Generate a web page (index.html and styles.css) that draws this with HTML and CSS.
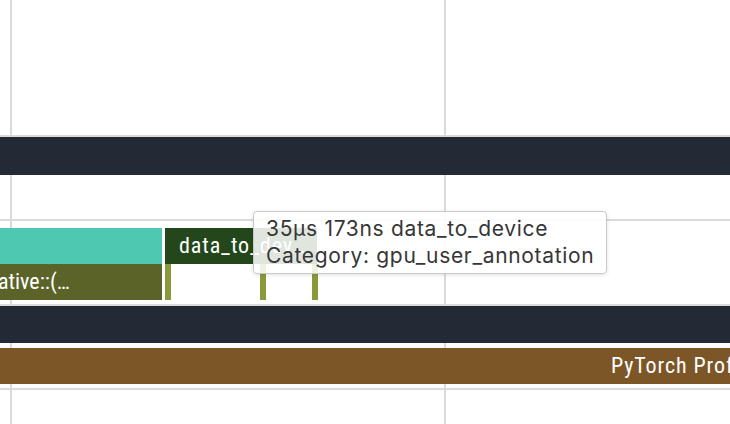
FILE: index.html
```html
<!DOCTYPE html>
<html>
<head>
<meta charset="utf-8">
<link rel="stylesheet" href="styles.css">
</head>
<body>
<div class="timeline">
  <div class="empty-top"></div>

  <div class="process proc-a">
    <div class="band band-dark band-a"></div>
    <div class="proc-a-space"></div>
  </div>

  <div class="process proc-b">
    <div class="row">
      <div class="slice slice-teal w-162"></div>
      <div class="slice slice-green w-152 ml-3"><span class="label">data_to_dev…</span></div>
    </div>
    <div class="row">
      <div class="slice slice-olive w-162"><span class="label label-cut">ative::(…</span></div>
      <div class="slice slice-thin ml-3"></div>
      <div class="slice slice-thin ml-89"></div>
      <div class="slice slice-thin ml-46"></div>
    </div>
  </div>

  <div class="process proc-c">
    <div class="band band-dark band-c"></div>
    <div class="band band-brown"><span class="label label-far">PyTorch Profiler</span></div>
  </div>

  <div class="process proc-d"></div>

  <div class="tooltip">
    <div>35µs 173ns data_to_device</div>
    <div>Category: gpu_user_annotation</div>
  </div>
</div>
</body>
</html>
```

FILE: styles.css
```css
html, body {
  margin: 0;
  padding: 0;
  background: #ffffff;
  overflow: hidden;
}

.timeline {
  position: relative;
  width: 730px;
  height: 424px;
  overflow: hidden;
  background-color: #ffffff;
  background-image:
    linear-gradient(to right, transparent 10px, #dadada 10px, #dadada 12px, transparent 12px),
    linear-gradient(to right, transparent 444px, #dadada 444px, #dadada 446px, transparent 446px);
}

.empty-top {
  height: 135px;
}

.process {
  border-top: 2px solid #dadada;
}

.proc-a-space {
  height: 44px;
}

.proc-b {
  padding-top: 7px;
  padding-bottom: 4px;
}

.proc-c {
  padding-bottom: 4px;
}

.proc-d {
  height: 40px;
}

.band {
  height: 36px;
  display: flex;
  align-items: center;
  overflow: hidden;
}

.band-dark {
  background: #232a36;
}

.band-a {
  height: 38px;
}

.band-c {
  height: 37px;
  margin-bottom: 5px;
}

.band-brown {
  background: #7c5627;
}

.row {
  display: flex;
  height: 36px;
}

.slice {
  height: 36px;
  display: flex;
  align-items: center;
  justify-content: center;
  overflow: hidden;
  flex: none;
}

.slice-teal {
  background: #4ec8b0;
}

.slice-green {
  background: #23471b;
  justify-content: flex-start;
}

.slice-olive {
  background: #5b6329;
  justify-content: flex-start;
}

.slice-thin {
  background: #8a9a3a;
  width: 6px;
}

.w-162 { width: 162px; }
.w-152 { width: 152px; }
.ml-3 { margin-left: 3px; }
.ml-89 { margin-left: 89px; }
.ml-46 { margin-left: 46px; }

.label {
  font-family: "Roboto Condensed", "DejaVu Sans Condensed", Roboto, sans-serif;
  font-stretch: condensed;
  font-size: 22px;
  line-height: 36px;
  letter-spacing: 0.9px;
  color: #ffffff;
  white-space: nowrap;
}

.slice-green .label {
  margin-left: 14px;
}

.label-cut {
  margin-left: -2px;
  letter-spacing: 0;
}

.label-far {
  margin-left: 611px;
}

.tooltip {
  position: absolute;
  left: 253px;
  top: 211px;
  width: 328px;
  padding: 3px 12px 4px 12px;
  border: 1px solid #c9c9c9;
  border-radius: 4px;
  background: rgba(255, 255, 255, 0.86);
  box-shadow: 0 1px 4px rgba(0, 0, 0, 0.12);
  font-family: Inter, "Liberation Sans", Arial, sans-serif;
  font-size: 21px;
  letter-spacing: 0.68px;
  line-height: 27px;
  color: #363636;
  white-space: nowrap;
}
```
